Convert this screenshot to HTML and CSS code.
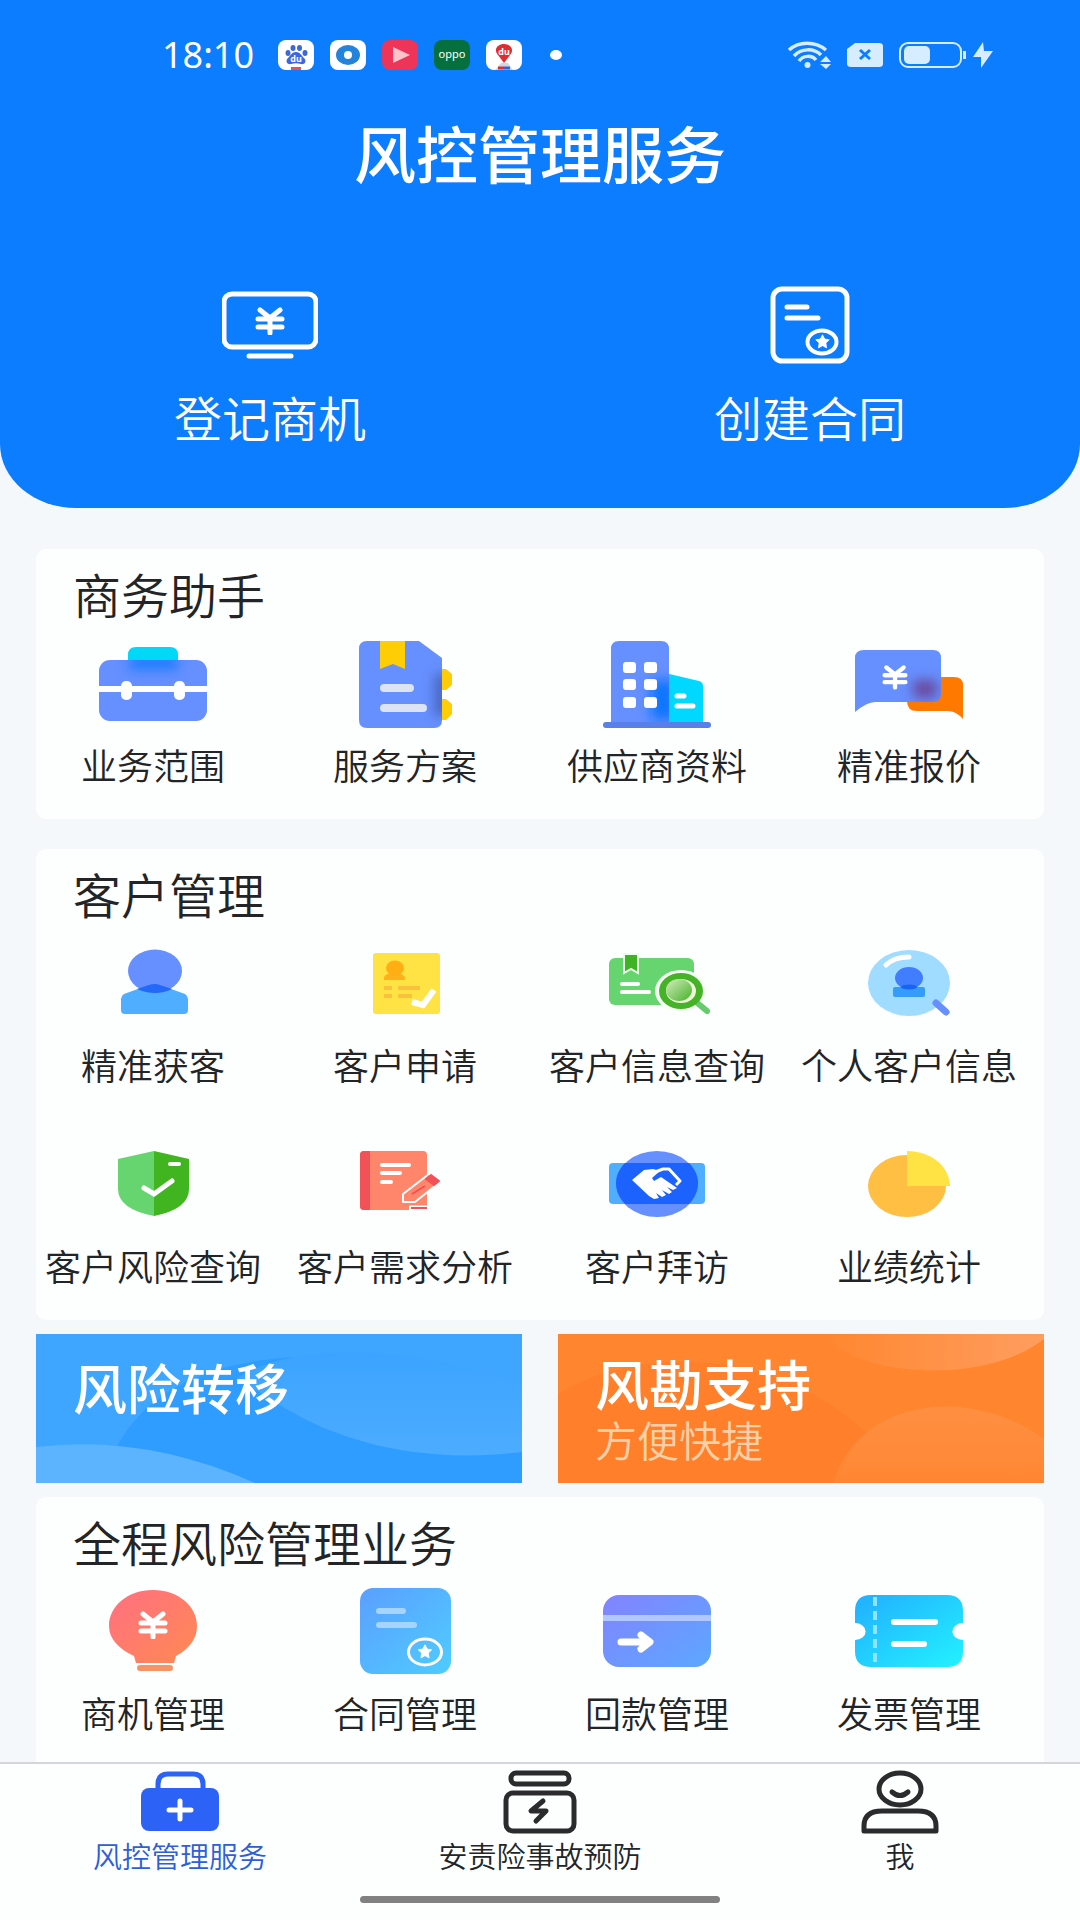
FILE: index.html
```html
<!DOCTYPE html>
<html lang="zh-CN">
<head>
<meta charset="utf-8">
<meta name="viewport" content="width=device-width, initial-scale=1">
<title>风控管理服务</title>
<link rel="stylesheet" href="styles.css">
</head>
<body>
<svg class="defs" width="0" height="0" aria-hidden="true">
  <defs>
    <symbol id="yen" viewBox="0 0 30 28"><path d="M5 3 15 11 25 3M3 12H27M3 20H27M15 11V26" fill="none" stroke="#fff" stroke-width="5" stroke-linecap="round"/></symbol>
    <symbol id="star" viewBox="0 0 20 20"><path d="M10 1 12.900 6.700 19 7.700 14.500 12 15.500 18.500 10 15.500 4.500 18.500 5.500 12 1 7.700 7.100 6.700Z" fill="#fff" stroke="#fff" stroke-linejoin="round"/></symbol>
    <filter id="soft" x="-100%" y="-100%" width="300%" height="300%"><feGaussianBlur stdDeviation="6"/></filter>
    <linearGradient id="g-bulb" x1="0" y1="0" x2="1" y2="1"><stop offset="0" stop-color="#ff6f82"/><stop offset="1" stop-color="#ff8a52"/></linearGradient>
    <linearGradient id="g-doc" x1="0" y1="0" x2="1" y2="1"><stop offset="0" stop-color="#5b9fff"/><stop offset="1" stop-color="#4fccff"/></linearGradient>
    <linearGradient id="g-card" x1="0" y1="0" x2="1" y2="1"><stop offset="0" stop-color="#8383ff"/><stop offset="1" stop-color="#5ba8ff"/></linearGradient>
    <linearGradient id="g-ticket" x1="0" y1="0" x2="1" y2="1"><stop offset="0" stop-color="#22aeff"/><stop offset="1" stop-color="#22f2ff"/></linearGradient>
    <linearGradient id="g-lens" x1="0" y1="0" x2="1" y2="1"><stop offset="0" stop-color="#d5edc0"/><stop offset="1" stop-color="#44b327"/></linearGradient>
    <linearGradient id="g-wave" x1="0" y1="0" x2="0" y2="1"><stop offset="0" stop-color="#3ca4ff"/><stop offset="1" stop-color="#4cacff"/></linearGradient>
    <linearGradient id="g-hill" x1="0" y1="0" x2="0" y2="1"><stop offset="0" stop-color="#ff8f42"/><stop offset="1" stop-color="#ff8733"/></linearGradient>
    <linearGradient id="g-glow" x1="0" y1="0" x2="1" y2="0"><stop offset="0" stop-color="#ffd0c0" stop-opacity="0"/><stop offset="1" stop-color="#ffc8b8" stop-opacity=".35"/></linearGradient>
    <clipPath id="c-brief"><rect y="20" width="108" height="61" rx="11"/></clipPath>
    <clipPath id="c-doc"><path d="M16 1H68L91 18V80Q91 88 83 88H16Q8 88 8 80V9Q8 1 16 1Z"/></clipPath>
    <clipPath id="c-tower"><path d="M8 84V9Q8 1 16 1H58Q66 1 66 9V84Z"/></clipPath>
    <clipPath id="c-quote"><path d="M9 10H78Q86 10 86 18V54Q86 62 78 62H20Q12 62 0 72V18Q0 10 9 10Z"/></clipPath>
  </defs>
</svg>

<header class="hero">
  <div class="status">
    <div class="status-group">
      <time class="clock">18:10</time>
      <div class="apps">
        <svg width="36" height="30" viewBox="0 0 36 30" aria-hidden="true"><rect width="36" height="30" rx="8" fill="#fff"/><g fill="#3c68d8"><ellipse cx="10" cy="13" rx="2.500" ry="3"/><ellipse cx="15" cy="8" rx="2.500" ry="3"/><ellipse cx="21.500" cy="8" rx="2.500" ry="3"/><ellipse cx="27" cy="13" rx="2.500" ry="3"/><path d="M18 12C22 12 23 15 26 18 29 21 27 25 23 24 20 23 16 23 13 24 9 25 7 21 10 18 13 15 14 12 18 12Z"/></g><text x="18" y="22" class="mark mark-du">du</text><rect x="13" y="27" width="10" height="3" fill="#e4525c"/></svg>
        <svg width="36" height="30" viewBox="0 0 36 30" aria-hidden="true"><rect width="36" height="30" rx="8" fill="#fff"/><ellipse cx="18" cy="15" rx="12" ry="10" fill="#2484dc"/><circle cx="18" cy="15" r="4" fill="#fff"/></svg>
        <svg width="36" height="30" viewBox="0 0 36 30" aria-hidden="true"><rect width="36" height="30" rx="8" fill="#ee3458"/><path d="M11 7 28 15 11 23Z" fill="#ffc4cb"/></svg>
        <svg width="36" height="30" viewBox="0 0 36 30" aria-hidden="true"><rect width="36" height="30" rx="8" fill="#05703d"/><text x="18" y="18" class="mark mark-oppo">oppo</text></svg>
        <svg width="36" height="30" viewBox="0 0 36 30" aria-hidden="true"><rect width="36" height="30" rx="8" fill="#fff"/><path d="M15 23H22L27 30H9Z" fill="#cfd9e2"/><path d="M18 23 12 15C7 9 12 4 18 4S29 9 24 15Z" fill="#e22c30"/><text x="18" y="15" class="mark mark-du">du</text><path d="M12 28H18" stroke="#e22c30" stroke-width="3"/><path d="M18 28H24" stroke="#3a62d0" stroke-width="3"/></svg>
      </div>
      <span class="more"></span>
    </div>
    <div class="status-group status-right">
      <svg width="44" height="28" viewBox="0 0 44 28" aria-hidden="true"><g fill="none" stroke="#d6ecff" stroke-width="3.500"><path d="M2 9C12 0 28 0 39 9"/><path d="M7 15C14 7 27 7 34 14"/><path d="M12 20C16 14 25 14 29 19"/></g><circle cx="20.500" cy="24" r="3" fill="#d6ecff"/><path d="M33 21 39 15 44 21ZM33 23H44L39 28Z" fill="#d6ecff"/></svg>
      <svg width="36" height="24" viewBox="0 0 36 24" aria-hidden="true"><path d="M8 0H32Q36 0 36 3V21Q36 24 32 24H4Q0 24 0 21V6Z" fill="#d6ecff"/><path d="M13 7 23 16M23 7 13 16" stroke="#0c7dff" stroke-width="3"/></svg>
      <div class="power">
        <svg width="68" height="26" viewBox="0 0 68 26" aria-hidden="true"><rect x="1" y="1" width="61" height="24" rx="8" fill="none" stroke="#d6ecff" stroke-width="2"/><rect x="5" y="4" width="26" height="18" rx="5" fill="#d6ecff"/><path d="M65.500 9V17" stroke="#d6ecff" stroke-width="3"/></svg>
        <svg width="20" height="26" viewBox="0 0 20 26" aria-hidden="true"><path d="M10 0 0 15H8V26L20 9H11Z" fill="#d6ecff"/></svg>
      </div>
    </div>
  </div>
  <h1 class="title">风控管理服务</h1>
  <nav class="actions">
    <a class="action" href="#">
      <svg width="96" height="78" viewBox="0 0 96 78" aria-hidden="true"><rect x="2" y="8" width="92" height="53" rx="8" fill="none" stroke="#fff" stroke-width="5"/><use href="#yen" x="33" y="21" width="30" height="28"/><path d="M27 70H69" stroke="#fff" stroke-width="5" stroke-linecap="round"/></svg>
      <span>登记商机</span>
    </a>
    <a class="action" href="#">
      <svg width="80" height="78" viewBox="0 0 80 78" aria-hidden="true"><rect x="3" y="3" width="74" height="72" rx="9" fill="none" stroke="#fff" stroke-width="5"/><path d="M17 21H37M17 32H48" stroke="#fff" stroke-width="5" stroke-linecap="round"/><ellipse cx="52" cy="56" rx="14.500" ry="11.500" fill="none" stroke="#fff" stroke-width="4"/><use href="#star" x="44" y="48" width="17" height="15"/></svg>
      <span>创建合同</span>
    </a>
  </nav>
</header>

<main class="content">
  <section class="panel">
    <h2 class="panel-title">商务助手</h2>
    <div class="tiles">
      <a class="tile" href="#"><svg class="icon" viewBox="0 0 108 88" aria-hidden="true"><path d="M29 30V15Q29 7 37 7H71Q79 7 79 15V30Z" fill="#00d8f8"/><rect y="20" width="108" height="61" rx="11" fill="#668fff"/><g clip-path="url(#c-brief)"><path d="M30 16H79V30H30Z" fill="#1f7dff" filter="url(#soft)"/></g><path d="M0 49H108" stroke="#fff" stroke-width="6"/><rect x="22" y="41" width="11" height="19" rx="5" fill="#fff"/><rect x="75" y="41" width="11" height="19" rx="5" fill="#fff"/></svg><span>业务范围</span></a>
      <a class="tile" href="#"><svg class="icon" viewBox="0 0 108 88" aria-hidden="true"><path d="M85 29H95L101 34V45L95 50H85ZM85 59H95L101 64V74L95 80H85Z" fill="#ffcd05"/><path d="M16 1H68L91 18V80Q91 88 83 88H16Q8 88 8 80V9Q8 1 16 1Z" fill="#668fff"/><g clip-path="url(#c-doc)"><path d="M84 34H96V76H84Z" fill="#4462b8" filter="url(#soft)"/></g><path d="M29 1H54V29L42 24 29 29Z" fill="#ffcd05"/><path d="M33 48H59M33 68H72" stroke="#dce3f4" stroke-width="8" stroke-linecap="round"/></svg><span>服务方案</span></a>
      <a class="tile" href="#"><svg class="icon" viewBox="0 0 108 88" aria-hidden="true"><path d="M62 33 96 41Q100 42 100 46V84H62Z" fill="#00d8ff"/><path d="M8 84V9Q8 1 16 1H58Q66 1 66 9V84Z" fill="#668fff"/><g clip-path="url(#c-tower)"><path d="M48 40H72V80H48Z" fill="#0f76ff" filter="url(#soft)"/></g><rect y="82" width="108" height="6" rx="3" fill="#587fea"/><g fill="#fff"><rect x="20" y="22" width="13" height="11" rx="3"/><rect x="41" y="22" width="13" height="11" rx="3"/><rect x="20" y="39" width="13" height="11" rx="3"/><rect x="41" y="39" width="13" height="11" rx="3"/><rect x="20" y="57" width="13" height="11" rx="3"/><rect x="41" y="57" width="13" height="11" rx="3"/></g><path d="M74 56H81M74 66H90" stroke="#fff" stroke-width="5" stroke-linecap="round"/></svg><span>供应商资料</span></a>
      <a class="tile" href="#"><svg class="icon" viewBox="0 0 108 88" aria-hidden="true"><path d="M60 37H99Q108 37 108 45V79Q101 71 93 71H62Q52 71 52 61V45Z" fill="#ff7800"/><path d="M9 10H78Q86 10 86 18V54Q86 62 78 62H20Q12 62 0 72V18Q0 10 9 10Z" fill="#668fff"/><g clip-path="url(#c-quote)"><path d="M58 40H82V58H58Z" fill="#6a4ba0" filter="url(#soft)"/></g><use href="#yen" x="27" y="24" width="26" height="26"/></svg><span>精准报价</span></a>
    </div>
  </section>

  <section class="panel panel-customers">
    <h2 class="panel-title">客户管理</h2>
    <div class="tiles">
      <a class="tile" href="#"><svg class="icon" viewBox="0 0 108 88" aria-hidden="true"><path d="M22 59Q22 56 25 54L50 45Q56 43 61 45L86 54Q89 56 89 59V70Q89 74 85 74H26Q22 74 22 70Z" fill="#4faeff"/><ellipse cx="56" cy="31" rx="27" ry="21.500" fill="#668fff"/><path d="M38 49 50 45Q56 43 61 45L73 49Q65 53 56 53T38 49Z" fill="#2468f8"/></svg><span>精准获客</span></a>
      <a class="tile" href="#"><svg class="icon" viewBox="0 0 108 88" aria-hidden="true"><rect x="22" y="13" width="67" height="61" rx="3" fill="#ffe243"/><path d="M33 40V37Q35 33 43 33T54 37V40Z" fill="#ffb01c"/><ellipse cx="44" cy="28" rx="9" ry="7.500" fill="#ffae14"/><path d="M33 48H41M47 48H69M33 56H41M47 56H61" stroke="#f9c23c" stroke-width="4"/><path d="M61 62 72 65 83 50" fill="none" stroke="#fff" stroke-width="6"/></svg><span>客户申请</span></a>
      <a class="tile" href="#"><svg class="icon" viewBox="0 0 108 88" aria-hidden="true"><rect x="6" y="18" width="85" height="47" rx="6" fill="#66d570"/><path d="M21 14H35V33L28 29 21 33Z" fill="#3fb324" stroke="#eaffea" stroke-width="2"/><path d="M19 44H35M19 52H46" stroke="#fff" stroke-width="4" stroke-linecap="round"/><ellipse cx="78" cy="51" rx="26" ry="21" fill="#f6fff4"/><path d="M92 61 104 71" stroke="#66cb6c" stroke-width="6" stroke-linecap="round"/><ellipse cx="78" cy="51" rx="22" ry="18" fill="#44b327"/><ellipse cx="78" cy="51" rx="15" ry="12" fill="#f0f7d8"/><ellipse cx="76" cy="50" rx="13" ry="11" fill="url(#g-lens)"/></svg><span>客户信息查询</span></a>
      <a class="tile" href="#"><svg class="icon" viewBox="0 0 108 88" aria-hidden="true"><ellipse cx="54" cy="43" rx="41" ry="33" fill="#a0dcff"/><path d="M31 25Q39 17 54 17" fill="none" stroke="#fff" stroke-width="5" stroke-linecap="round"/><rect x="38" y="47" width="32" height="10" rx="2" fill="#359cf8"/><ellipse cx="54" cy="38" rx="14" ry="11" fill="#417eff"/><ellipse cx="54" cy="47" rx="8" ry="2.500" fill="#1664f4"/><path d="M81 63 91 72" stroke="#668fff" stroke-width="7" stroke-linecap="round"/></svg><span>个人客户信息</span></a>
      <a class="tile" href="#"><svg class="icon" viewBox="0 0 108 88" aria-hidden="true"><path d="M55 10V75Q19 68 19 48V18Z" fill="#66d570"/><path d="M55 10 90 18V48Q90 68 55 75Z" fill="#40b51f"/><path d="M71 23H80" stroke="#fff" stroke-width="4" stroke-linecap="round"/><path d="M45 47 55 53 73 40" fill="none" stroke="#fff" stroke-width="5" stroke-linecap="round"/></svg><span>客户风险查询</span></a>
      <a class="tile" href="#"><svg class="icon" viewBox="0 0 108 88" aria-hidden="true"><rect x="9" y="10" width="67" height="59" rx="4" fill="#ff866b"/><path d="M19 10V69H13Q9 69 9 65V14Q9 10 13 10Z" fill="#f25158"/><path d="M31 24H58M31 32H49M31 41H40" stroke="#fff" stroke-width="4" stroke-linecap="round"/><path d="M52 61V53L78 33 89 41 64 61Z" fill="#ff866b" stroke="#fff" stroke-width="2" stroke-linejoin="round"/><path d="M80 34 88 40 83 44 75 38Z" fill="#f25158" stroke="#f25158" stroke-width="2" stroke-linejoin="round"/><path d="M61 53 74 45" stroke="#f25158" stroke-width="2"/><path d="M58 67H77" stroke="#fff" stroke-width="5"/><path d="M60 67H76" stroke="#f25158" stroke-width="2"/></svg><span>客户需求分析</span></a>
      <a class="tile" href="#"><svg class="icon" viewBox="0 0 108 88" aria-hidden="true"><rect x="6" y="22" width="96" height="41" rx="4" fill="#4faeff"/><ellipse cx="54" cy="43" rx="41" ry="33" fill="#668fff"/><path d="M22 22H86C98 34 98 50 86 63H22C10 50 10 34 22 22Z" fill="#1b62ff"/><path d="M29 39 41 29 50 28 57 30 49 37 51 40 58 36 74 47 70 49 64 46 69 51 66 53 59 49 63 54 59 56 53 52 56 57 51 58 46 55Z" fill="#fff"/><path d="M52 31 60 28H66L77 40 73 44" fill="none" stroke="#fff" stroke-width="3" stroke-linejoin="round"/></svg><span>客户拜访</span></a>
      <a class="tile" href="#"><svg class="icon" viewBox="0 0 108 88" aria-hidden="true"><ellipse cx="52" cy="45" rx="39" ry="31" fill="#ffbf42"/><path d="M52 10C75 10 94 24 95 45H52Z" fill="#ffe243"/></svg><span>业绩统计</span></a>
    </div>
  </section>

  <div class="banners">
    <a class="banner banner-blue" href="#">
      <svg class="banner-art" viewBox="0 0 486 149" preserveAspectRatio="none" aria-hidden="true"><path d="M80 115C110 55 180 20 300 22S440 80 486 90V149H80Z" fill="#2f9dff"/><path d="M200 45C270 0 400 20 486 50V118C390 130 300 110 235 65Z" fill="url(#g-wave)"/><path d="M0 113Q110 100 219 149H0Z" fill="#5cb4ff"/></svg>
      <strong>风险转移</strong>
    </a>
    <a class="banner banner-orange" href="#">
      <svg class="banner-art" viewBox="0 0 486 149" preserveAspectRatio="none" aria-hidden="true"><path d="M0 60C60 20 210 0 315 105L280 149H0Z" fill="#ff7c28" opacity=".6"/><path d="M265 0C300 45 430 50 486 5V0Z" fill="url(#g-glow)"/><path d="M275 149C300 65 410 50 486 105V149Z" fill="url(#g-hill)"/></svg>
      <strong>风勘支持</strong>
      <span>方便快捷</span>
    </a>
  </div>

  <section class="panel panel-last">
    <h2 class="panel-title">全程风险管理业务</h2>
    <div class="tiles">
      <a class="tile" href="#"><svg class="icon" viewBox="0 0 108 88" aria-hidden="true"><path d="M54 2C79 2 98 18 98 38 98 51 90 61 77 68L75 75H37L35 68C20 61 10 51 10 38 10 18 29 2 54 2Z" fill="url(#g-bulb)"/><rect x="38" y="77" width="36" height="6" rx="3" fill="#fb9264"/><use href="#yen" x="39" y="23" width="30" height="28"/></svg><span>商机管理</span></a>
      <a class="tile" href="#"><svg class="icon" viewBox="0 0 108 88" aria-hidden="true"><rect x="9" width="91" height="86" rx="13" fill="url(#g-doc)"/><path d="M28 23H52M28 37H63" stroke="#a5d4ff" stroke-width="6" stroke-linecap="round"/><ellipse cx="74" cy="64" rx="16.500" ry="13" fill="none" stroke="#fff" stroke-width="3"/><use href="#star" x="65" y="56" width="18" height="15"/></svg><span>合同管理</span></a>
      <a class="tile" href="#"><svg class="icon" viewBox="0 0 108 88" aria-hidden="true"><rect y="7" width="108" height="72" rx="16" fill="url(#g-card)"/><path d="M0 30H108" stroke="#b0c8ff" stroke-width="6"/><path d="M18 54H46M38 47 47 54 38 61" fill="none" stroke="#fff" stroke-width="7" stroke-linecap="round" stroke-linejoin="round"/></svg><span>回款管理</span></a>
      <a class="tile" href="#"><svg class="icon" viewBox="0 0 108 88" aria-hidden="true"><path d="M16 7H92Q108 7 108 23V35A10 8 0 0 0 108 52V63Q108 79 92 79H16Q0 79 0 63V52A10 8 0 0 0 0 35V23Q0 7 16 7Z" fill="url(#g-ticket)"/><path d="M20 9V77" stroke="#8fe4ff" stroke-width="4" stroke-dasharray="9 5"/><path d="M39 34H80M39 56H69" stroke="#fff" stroke-width="6" stroke-linecap="round"/></svg><span>发票管理</span></a>
    </div>
  </section>
</main>

<footer class="dock">
  <nav class="tabs">
    <a class="tab tab-active" href="#" aria-current="page"><svg width="80" height="64" viewBox="0 0 80 64" aria-hidden="true"><path d="M18 26V14Q18 4 28 4H53Q63 4 63 14V26" fill="none" stroke="#2c62f6" stroke-width="5"/><rect x="1" y="18" width="78" height="43" rx="8" fill="#2c62f6"/><path d="M29 40H51M40 31V49" stroke="#fff" stroke-width="5" stroke-linecap="round"/></svg><span>风控管理服务</span></a>
    <a class="tab" href="#"><svg width="80" height="64" viewBox="0 0 80 64" aria-hidden="true"><g fill="none" stroke="#2b2b2d" stroke-width="5" stroke-linejoin="round" stroke-linecap="round"><rect x="11" y="3" width="58" height="11" rx="5"/><rect x="6" y="23" width="68" height="38" rx="7"/><path d="M43 31 31 41H46L36 51"/></g></svg><span>安责险事故预防</span></a>
    <a class="tab" href="#"><svg width="80" height="64" viewBox="0 0 80 64" aria-hidden="true"><g fill="none" stroke="#2b2b2d" stroke-width="5" stroke-linejoin="round" stroke-linecap="round"><ellipse cx="40" cy="19" rx="21" ry="16"/><path d="M32 22Q40 29 48 22"/><path d="M4 61V56Q4 41 22 41H58Q76 41 76 56V61Z"/></g></svg><span>我</span></a>
  </nav>
  <div class="home-bar"></div>
</footer>
</body>
</html>
```
FILE: styles.css
```css
* {
  box-sizing: border-box;
}

body {
  margin: 0;
  min-height: 100vh;
  display: flex;
  flex-direction: column;
  background: #f5f8fb;
  color: #232426;
  font-family: "Noto Sans CJK SC", "Noto Sans", sans-serif;
  font-weight: 350;
}

a {
  color: inherit;
  text-decoration: none;
}

svg {
  display: block;
}

.defs {
  position: absolute;
}

h1,
h2 {
  margin: 0;
  font-weight: 350;
}

/* Header */
.hero {
  background: #0c7dff;
  color: #fff;
  border-radius: 0 0 76px 76px / 0 0 64px 64px;
  padding-bottom: 60px;
}

.status {
  display: flex;
  justify-content: space-between;
  align-items: center;
  height: 110px;
  padding: 0 87px 0 162px;
}

.status-group {
  display: flex;
  align-items: center;
  gap: 24px;
}

.status-right {
  gap: 16px;
}

.power {
  display: flex;
  gap: 6px;
}

.clock {
  font-family: "Noto Sans", sans-serif;
  font-size: 36px;
  font-weight: 400;
  line-height: 40px;
}

.apps {
  display: flex;
  gap: 16px;
}

.mark {
  fill: #fff;
  font-family: "Noto Sans", sans-serif;
  text-anchor: middle;
}

.mark-du {
  font-size: 9px;
  font-weight: 700;
}

.mark-oppo {
  font-size: 11px;
  font-weight: 400;
}

.more {
  width: 12px;
  height: 10px;
  margin-left: 4px;
  border-radius: 50%;
  background: #fff;
}

.title {
  font-size: 62px;
  font-weight: 500;
  line-height: 84px;
  text-align: center;
}

.actions {
  display: grid;
  grid-template-columns: 1fr 1fr;
  padding-top: 92px;
}

.action {
  display: flex;
  flex-direction: column;
  align-items: center;
  gap: 20px;
  font-size: 48px;
  font-weight: 350;
  line-height: 64px;
}

/* Content */
.content {
  flex: 1;
  display: flex;
  flex-direction: column;
  gap: 14px;
  padding: 41px 36px 0;
}

.panel {
  padding: 20px 0 31px;
  border-radius: 10px;
  background: #fdfefe;
}

.panel-customers {
  margin-top: 16px;
}

.panel-last {
  flex: 1;
  padding-bottom: 16px;
  border-radius: 10px 10px 0 0;
}

.panel-title {
  padding: 0 37px;
  font-size: 48px;
  line-height: 48px;
}

.tiles {
  display: grid;
  grid-template-columns: repeat(4, 1fr);
  row-gap: 53px;
  margin: 23px 9px 0 -9px;
}

.tile {
  display: flex;
  flex-direction: column;
  align-items: center;
  gap: 12px;
  font-size: 36px;
  line-height: 48px;
  white-space: nowrap;
}

.icon {
  width: 108px;
  height: 88px;
}

.banners {
  display: grid;
  grid-template-columns: 1fr 1fr;
  gap: 36px;
}

.banner {
  position: relative;
  display: flex;
  flex-direction: column;
  gap: 8px;
  min-height: 149px;
  padding: 22px 37px 15px;
  color: #fff;
}

.banner-blue {
  padding-top: 26px;
  background: #3ea6ff;
}

.banner-orange {
  background: #ff862f;
}

.banner-art {
  position: absolute;
  inset: 0;
  width: 100%;
  height: 100%;
}

.banner strong {
  position: relative;
  font-size: 54px;
  font-weight: 500;
  line-height: 54px;
}

.banner span {
  position: relative;
  color: #ffd0a8;
  font-size: 42px;
  line-height: 42px;
}

/* Bottom navigation */
.dock {
  position: sticky;
  bottom: 0;
  border-top: 2px solid #d4d6d9;
  background: #fdfefe;
}

.tabs {
  display: grid;
  grid-template-columns: repeat(3, 1fr);
  padding-top: 6px;
}

.tab {
  display: flex;
  flex-direction: column;
  align-items: center;
  gap: 3px;
  font-size: 29px;
  line-height: 36px;
}

.tab-active {
  color: #2c5fd8;
}

.home-bar {
  width: 360px;
  height: 7px;
  margin: 23px auto 17px;
  border-radius: 4px;
  background: #818181;
}
```
